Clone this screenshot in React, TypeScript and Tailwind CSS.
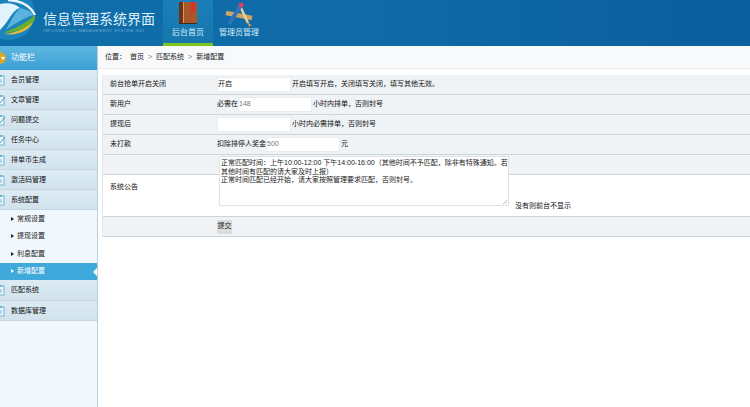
const cjk = "font-['Liberation_Sans','Noto_Sans_CJK_SC',sans-serif]";

function DocIcon({ check }: { check?: boolean }) {
  return (
    <svg width="11" height="12" viewBox="0 0 11 12" className="shrink-0">
      <rect x="1" y="2" width="8" height="9" fill="#eef7fb" stroke="#6fb4d6" />
      <rect x="3" y="1" width="4" height="2" fill="#6fb4d6" />
      {check ? (
        <path d="M3 7l2 2 5-6" fill="none" stroke="#4a9cc7" strokeWidth="1" />
      ) : (
        <path d="M3 6h4M3 8h4" stroke="#6fb4d6" strokeWidth="1" />
      )}
    </svg>
  );
}

function MenuItem({ label, check, h = "h-[20px]" }: { label: string; check?: boolean; h?: string }) {
  return (
    <div className={"flex items-center pt-px border-b border-[#c3d6e1] bg-gradient-to-b from-[#dcebf3] to-[#d2e3ed] " + h}>
      <div className="w-[11px] -ml-[5px] mr-[5px] flex">
        <DocIcon check={check} />
      </div>
      <span className="text-[7px] text-[#111]">{label}</span>
    </div>
  );
}

function SubItem({ label, active }: { label: string; active?: boolean }) {
  return (
    <div
      className={
        "h-[17.5px] flex items-center pl-[11px] gap-[3px] text-[7px] relative " +
        (active ? "bg-[#3fa9dc] text-white" : "text-[#222]")
      }
    >
      <span
        className={
          "w-0 h-0 border-y-[2px] border-y-transparent border-l-[3px] " +
          (active ? "border-l-white" : "border-l-[#222]")
        }
      />
      {label}
      {active && (
        <span className="absolute right-0 top-[5px] w-0 h-0 border-y-[4px] border-y-transparent border-r-[4px] border-r-white" />
      )}
    </div>
  );
}

function Row({
  label,
  white,
  h,
  top,
  children,
}: {
  label?: string;
  white?: boolean;
  h: string;
  top?: boolean;
  children?: React.ReactNode;
}) {
  return (
    <div className={"flex items-center border-b border-[#cfd4d6] " + h + " " + (white ? "bg-white" : "bg-[#eff3f6]")}>
      <div className={"w-[114px] pl-[7px] shrink-0 text-[7px] text-[#111] " + (top ? "self-start mt-[7px]" : "")}>
        {label}
      </div>
      <div className="flex items-center self-stretch flex-1 text-[7px] text-[#111] min-w-0">{children}</div>
    </div>
  );
}

function Input({ value, strong }: { value?: string; strong?: boolean }) {
  return (
    <div
      className={
        "h-[15px] w-[74px] bg-white border border-[#e9ecee] flex items-center text-[7px] " +
        (strong ? "text-[#222]" : "text-[#777]")
      }
    >
      {value}
    </div>
  );
}

export default function App() {
  return (
    <div className={"w-[750px] h-[407px] overflow-hidden bg-white flex flex-col " + cjk}>
      {/* Header */}
      <header className="h-[46px] shrink-0 flex bg-gradient-to-r from-[#0f6ea9] via-[#0f6aa6] to-[#0a5f9c] relative">
        <div className="w-[163px] relative overflow-hidden">
          <svg width="40" height="46" viewBox="0 0 40 46" className="absolute left-0 top-0">
            <circle cx="9" cy="14" r="26" fill="#1b83bd" />
            <path d="M8 0Q28 1 35 15" fill="none" stroke="#eaf7fc" strokeWidth="2.500" />
            <path d="M0 4C8 2 16 4 20 8 12 10 10 20 0 30z" fill="#e2f4fb" />
            <path d="M20 8C28 10 32 12 33 15 24 18 14 24 6 30 10 22 14 14 20 8z" fill="#59b3dc" />
            <path d="M35 15C37 24 22 32 3 33 16 28 28 22 35 15z" fill="#6aae2e" />
            <path d="M33 22C30 30 18 36 4 34 16 33 26 28 33 22z" fill="#e9bb36" />
          </svg>
          <div className="absolute left-[43px] top-[9px] text-[14px] leading-[20px] text-[#dff1fa] whitespace-nowrap">
            信息管理系统界面
          </div>
          <div className="absolute left-[43px] top-[28px] text-[4px] leading-[5px] tracking-[0.55px] text-[#6fb2da] whitespace-nowrap">
            INFORMATION MANAGEMENT SYSTEM GUI
          </div>
        </div>
        <div className="w-[50px] bg-gradient-to-b from-[#1a7fb8] to-[#1776ae] border-b-[3px] border-b-[#7bc61e] flex flex-col items-center">
          <svg width="20" height="24" viewBox="0 0 20 24" className="mt-[1px]">
            <rect x="1" y="1" width="18" height="22" fill="#a9562a" />
            <rect x="1" y="1" width="4" height="22" fill="#6e3215" />
            <rect x="5" y="1" width="1" height="22" fill="#d69a6b" />
            <path d="M13 1h4v11l-2-2-2 2z" fill="#d8322e" />
            <rect x="1" y="22" width="18" height="1" fill="#3e2a1c" />
          </svg>
          <span className="text-[8px] leading-[10px] mt-[3px] text-[#d5ecf8]">后台首页</span>
        </div>
        <div className="w-[52px] flex flex-col items-center">
          <svg width="28" height="26" viewBox="0 0 28 26" className="mt-[1px]">
            <path d="M1 12L27 17" stroke="#cfa266" strokeWidth="4.500" />
            <path d="M16 7l7 15" stroke="#e3cfa2" strokeWidth="2.500" />
            <path d="M16 4L4 23" stroke="#2f74b8" strokeWidth="4" />
            <circle cx="16" cy="4" r="2.500" fill="#d8425e" />
            <path d="M22 21l2 5 3-2z" fill="#b99462" />
          </svg>
          <span className="text-[8px] leading-[10px] mt-[1px] text-[#d5ecf8] whitespace-nowrap">管理员管理</span>
        </div>
      </header>

      <div className="flex flex-1 min-h-0">
        {/* Sidebar */}
        <aside className="w-[98px] shrink-0 bg-[#f0f8fd] border-r border-[#b9cfdc] flex flex-col">
          <div className="h-[24px] flex items-center bg-gradient-to-b from-[#5eb7e0] to-[#3a9fd4]">
            <span className="w-[12px] h-[12px] rounded-full bg-[#d9a72a] -ml-[6px] mr-[5px] shrink-0 flex items-center justify-end pr-[1px]">
              <span className="w-0 h-0 border-x-[2px] border-x-transparent border-t-[3px] border-t-white" />
            </span>
            <span className="text-[8px] text-white">功能栏</span>
          </div>
          <MenuItem label="会员管理" />
          <MenuItem label="文章管理" check />
          <MenuItem label="问题提交" check />
          <MenuItem label="任务中心" check />
          <MenuItem label="排单币生成" />
          <MenuItem label="激活码管理" />
          <MenuItem label="系统配置" />
          <SubItem label="常规设置" />
          <SubItem label="提现设置" />
          <SubItem label="利息配置" />
          <SubItem label="新增配置" active />
          <MenuItem label="匹配系统" h="h-[20.5px]" />
          <MenuItem label="数据库管理" h="h-[20.5px]" />
        </aside>

        {/* Main */}
        <main className="flex-1 min-w-0 flex flex-col">
          <div className="h-[23px] shrink-0 flex items-center bg-[#f7f9fa] border-b border-[#e6e9eb] pl-[7px] text-[7px] text-[#222] whitespace-nowrap">
            <span className="w-[25px]">位置：</span>
            <span>首页</span>
            <span className="mx-[4px] text-[#777]">&gt;</span>
            <span>匹配系统</span>
            <span className="mx-[4px] text-[#777]">&gt;</span>
            <span>新增配置</span>
          </div>
          <div className="ml-[4px] mt-[6px] border-l border-[#e4e8ea]">
            <Row label="前台抢单开启关闭" h="h-[20px]">
              <Input value="开启" strong />
              <span className="ml-[1px]">开启填写开启，关闭填写关闭，填写其他无效。</span>
            </Row>
            <Row label="新用户" h="h-[20px]">
              <span>必需在</span>
              <Input value="148" />
              <span className="ml-[1px]">小时内排单，否则封号</span>
            </Row>
            <Row label="提现后" h="h-[20px]">
              <Input />
              <span className="ml-[1px]">小时内必需排单，否则封号</span>
            </Row>
            <Row label="未打款" h="h-[20px]">
              <span>扣除排停人奖金</span>
              <Input value="500" />
              <span className="ml-[1px]">元</span>
            </Row>
            <div className="relative">
              <Row h="h-[20px]" />
              <Row label="系统公告" white top h="h-[42px]">
                <span className="ml-[298px] self-end mb-[5px] whitespace-nowrap">没有则前台不显示</span>
              </Row>
              <div className="absolute left-[116px] top-[1px] w-[290px] h-[50px] bg-white border border-[#dfe3e5] pt-[2px] px-[1px] text-[7px] leading-[8.500px] text-[#222] overflow-hidden whitespace-nowrap">
                <svg width="6" height="6" viewBox="0 0 6 6" className="absolute right-0 bottom-0">
                  <path d="M1 5l4-4M3.500 5L5 3.500" stroke="#888" strokeWidth="0.6" />
                </svg>
                正常匹配时间：上午10:00-12:00 下午14:00-16:00（其他时间不予匹配，除非有特殊通知。若
                <br />
                其他时间有匹配的请大家及时上报）
                <br />
                正常时间匹配已经开始，请大家按照管理要求匹配，否则封号。
              </div>
            </div>
            <Row h="h-[20px]">
              <span className="h-[14px] w-[15px] bg-[#dcdcdc] flex items-center justify-center text-[#222]">提交</span>
            </Row>
          </div>
        </main>
      </div>
    </div>
  );
}
